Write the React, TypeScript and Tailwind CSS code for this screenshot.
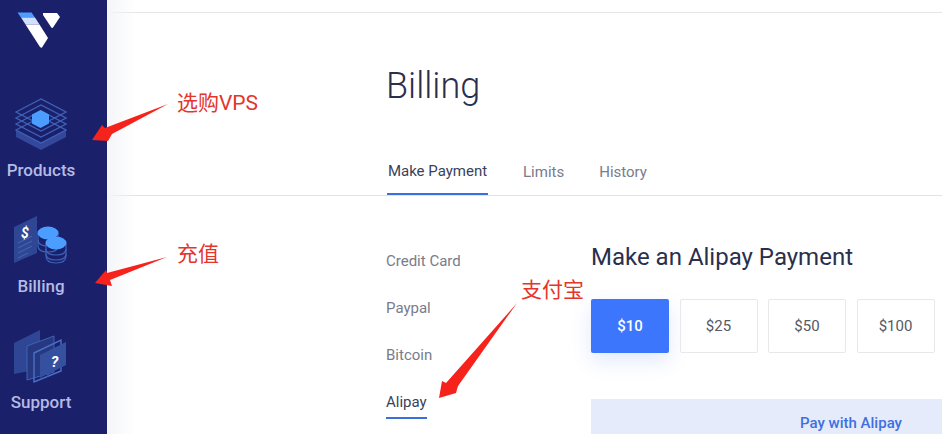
const font = { fontFamily: "Roboto, 'Noto Sans CJK SC', sans-serif" };

function Logo() {
  return (
    <svg width="44" height="36" viewBox="0 0 44 36" className="block">
      <path d="M0.5 0.5H14.5L18 5.5H4Z" fill="#4f9cff" />
      <path d="M4 5.5H18L22.5 12.5H8.5Z" fill="#cfe0ff" />
      <path d="M8.5 12.5H22.5L31 26L25 35.5Q24 36 23 35Z" fill="#fff" />
      <path d="M26 1H40L43 5L36 15.5Q35 16.5 34 15L26 3Z" fill="#fff" />
    </svg>
  );
}

function ProductsIcon() {
  return (
    <svg width="52" height="52" viewBox="0 0 52 52" className="block">
      <path d="M1 32L26 45L51 32V39L26 52L1 39Z" fill="#33489b" />
      <g fill="none" stroke="#3f62b8" strokeWidth="1.2">
        <path d="M1 14L26 1L51 14L26 27Z" />
        <path d="M1 20L26 7L51 20L26 33Z" />
        <path d="M1 26L26 13L51 26L26 39Z" />
        <path d="M1 32L26 19L51 32L26 45Z" />
      </g>
      <path d="M25.5 12L34 16.5V25.5L25.5 30L17 25.5V16.5Z" fill="#4b9dff" />
    </svg>
  );
}

function BillingIcon() {
  return (
    <svg width="54" height="50" viewBox="0 0 54 50" className="block">
      <path d="M0 12L23 1V38L0 48Z" fill="#2f4694" />
      <path d="M4 28L18 21M4 33L18 26M4 38L18 31M4 43L14 38" stroke="#4560ad" strokeWidth="1.2" />
      <text x="7" y="23" fill="#fff" fontSize="14" fontWeight="700" fontStyle="italic" fontFamily="Roboto, sans-serif">$</text>
      <g fill="none" stroke="#3f62b8" strokeWidth="1.2">
        <path d="M24 18V31Q24 37 34 37Q44 37 44 31V18" />
        <path d="M24 25Q24 31 34 31Q44 31 44 25" />
        <path d="M32 28V41Q32 48 42 48Q52 48 52 41V28" />
        <path d="M32 34Q32 40 42 40Q52 40 52 34" />
        <path d="M32 39Q32 45 42 45Q52 45 52 39" />
      </g>
      <ellipse cx="34" cy="18" rx="10.5" ry="6.5" fill="#4b9dff" />
      <ellipse cx="42" cy="28" rx="10.5" ry="6.5" fill="#4b9dff" />
    </svg>
  );
}

function SupportIcon() {
  return (
    <svg width="54" height="54" viewBox="0 0 54 54" className="block">
      <path d="M0 13L26 0V39L0 44Z" fill="#2f4694" />
      <path d="M13 16L40 6V42L13 50Z" fill="#26387f" stroke="#3f62b8" strokeWidth="1" />
      <path d="M20 23L47 10V41L20 52Z" fill="none" stroke="#4a70c8" strokeWidth="1.4" />
      <path d="M26 25L52 12V35L38 42L33 47V44L26 48Z" fill="#34509f" />
      <text x="37" y="37" fill="#fff" fontSize="15" fontWeight="700" fontStyle="italic" fontFamily="Roboto, sans-serif">?</text>
    </svg>
  );
}

function NavItem({ icon, label }: { icon: React.ReactNode; label: string }) {
  return (
    <div className="flex flex-col items-center">
      {icon}
      <span className="text-[17px] font-medium leading-5 text-[#b5bae4]">{label}</span>
    </div>
  );
}

function Arrow({ className, d, w, h }: { className: string; d: string; w: number; h: number }) {
  return (
    <svg width={w} height={h} viewBox={`0 0 ${w} ${h}`} className={className}>
      <path d={d} fill="#f5231b" />
    </svg>
  );
}

const amounts = ["$25", "$50", "$100"];

export default function App() {
  return (
    <div className="relative flex h-[434px] w-[942px] overflow-hidden bg-white" style={font}>
      <aside className="flex w-[107px] shrink-0 flex-col items-center bg-[#1a216a] pr-[25px]">
        <div className="mt-[12px] mb-[50px] -ml-[4px]">
          <Logo />
        </div>
        <div className="mb-[35px]">
          <NavItem icon={<div className="mb-[10px]"><ProductsIcon /></div>} label="Products" />
        </div>
        <div className="mb-[34px]">
          <NavItem icon={<div className="mb-[11px]"><BillingIcon /></div>} label="Billing" />
        </div>
        <div>
          <NavItem icon={<div className="mb-[8px]"><SupportIcon /></div>} label="Support" />
        </div>
      </aside>

      <main className="relative min-w-0 flex-1">
        <div className="pointer-events-none absolute inset-y-0 left-0 w-[28px] bg-gradient-to-r from-[#f4f5f8] to-transparent" />
        <div className="h-[13px] border-b border-[#e6e6e6]" />
        <div className="pl-[279px]">
          <h1 className="mt-[50px] text-[36px] font-light leading-[46px] text-[#2a2f4d]">Billing</h1>
          <div className="mt-[39px] flex h-[47px] gap-[35px] text-[15px]">
            <div className="ml-[1px] flex h-[47px] w-[101px] items-center justify-center border-b-2 border-[#3a6fe0] pt-[2px] text-[#3a3f5c]">
              Make Payment
            </div>
            <div className="flex items-center pt-[2px] text-[#787c8c]">Limits</div>
            <div className="flex items-center pt-[2px] text-[#787c8c]">History</div>
          </div>
        </div>
        <div className="border-b border-[#e2e3e6]" />
        <div className="flex pl-[279px] pt-[36px]">
          <ul className="w-[205px] pt-[19px] text-[15px] leading-[20px] text-[#787c8c]">
            <li className="mb-[27px]">Credit Card</li>
            <li className="mb-[27px]">Paypal</li>
            <li className="mb-[27px]">Bitcoin</li>
            <li className="w-fit border-b-2 border-[#3a6fe0] pb-[5px] text-[#3a3f5c]">Alipay</li>
          </ul>
          <div className="min-w-0 flex-1">
            <h2 className="text-[24px] leading-[50px] text-[#2a2f4d]">Make an Alipay Payment</h2>
            <div className="mt-[17px] flex gap-[10.5px] text-[15px]">
              <div className="flex h-[54px] w-[78px] items-center justify-center rounded-[2px] bg-[#3b76fd] font-medium text-white shadow-[0_8px_20px_rgba(60,110,230,0.15)]">
                $10
              </div>
              {amounts.map((amount) => (
                <div
                  key={amount}
                  className="flex h-[54px] w-[78px] items-center justify-center rounded-[2px] border border-[#e8e8ea] text-[#555964]"
                >
                  {amount}
                </div>
              ))}
            </div>
            <div className="mt-[46px] flex h-[60px] w-[520px] items-start justify-center bg-[#e5ebfa] pt-[14px] text-[15px] font-medium leading-[20px] text-[#3f6fe0]">
              Pay with Alipay
            </div>
          </div>
        </div>
      </main>

      <span className="absolute left-[177px] top-[91px] text-[21px] leading-6 text-[#e5352b]">选购VPS</span>
      <span className="absolute left-[177px] top-[242px] text-[21px] leading-6 text-[#e5352b]">充值</span>
      <span className="absolute left-[521px] top-[278px] text-[21px] leading-6 text-[#e5352b]">支付宝</span>

      <Arrow className="absolute left-[91px] top-[103px]" w={78} h={39} d="M77 1L21 31L17 38L1 37L11 22L14 25Z" />
      <Arrow className="absolute left-[94px] top-[256px]" w={74} h={32} d="M73 1L16 24L18 30L1 27L12 14L13 17Z" />
      <Arrow className="absolute left-[438px] top-[303px]" w={80} h={96} d="M79 0L20 83L18 90L1 95L4 78L8 80Z" />
    </div>
  );
}
